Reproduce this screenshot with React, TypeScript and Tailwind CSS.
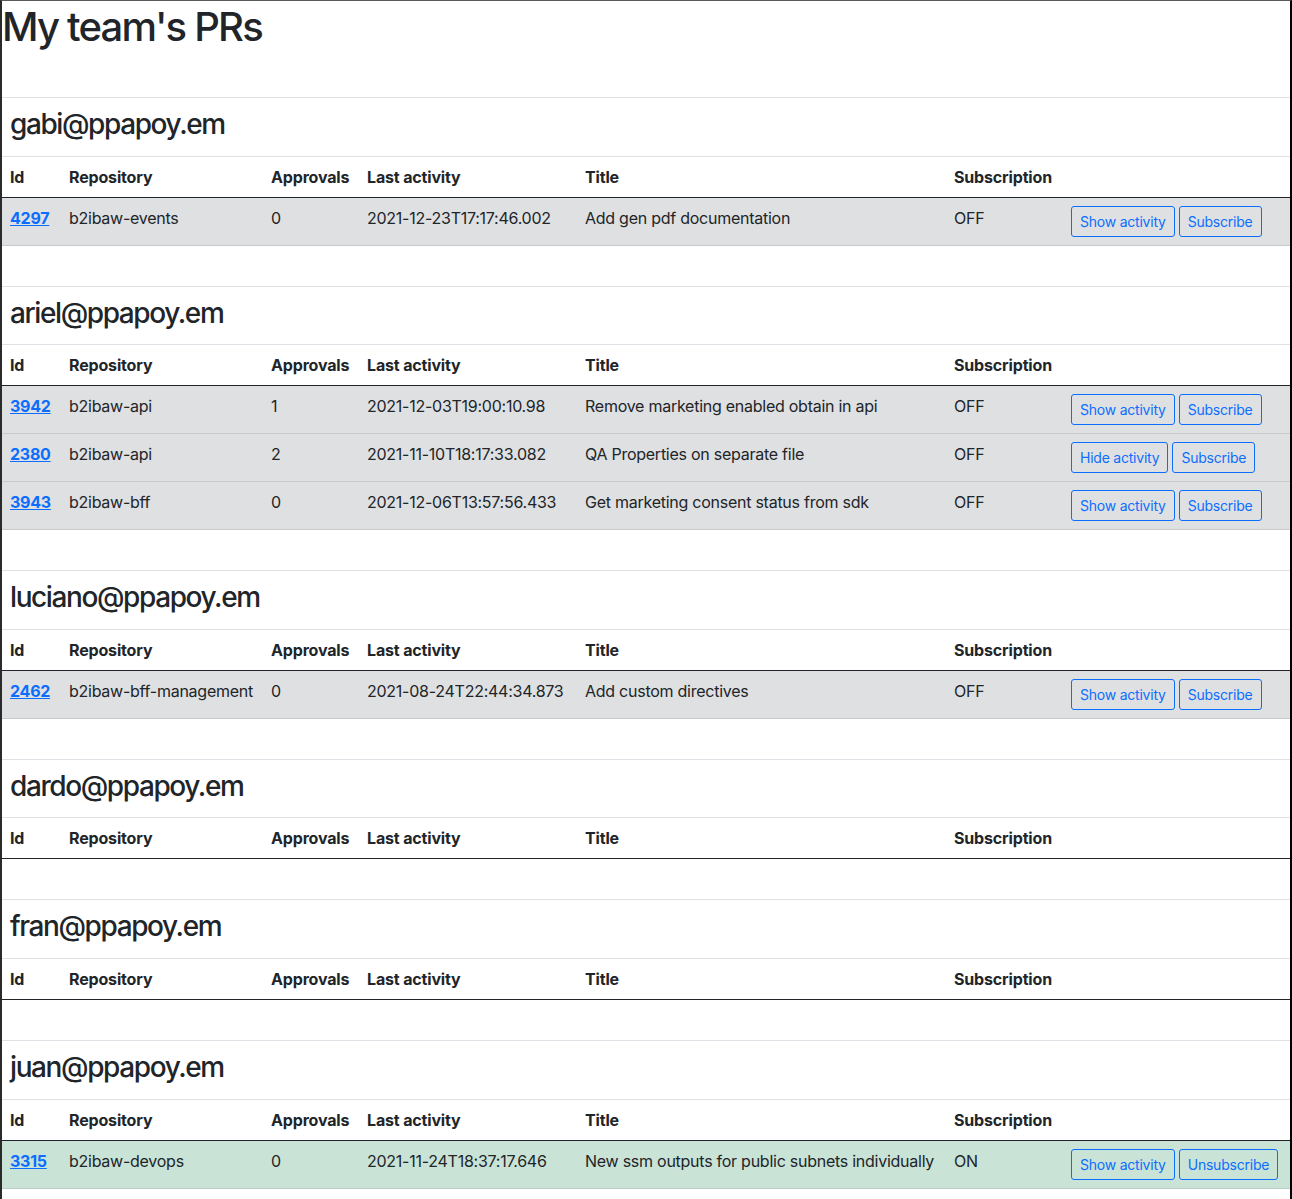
import React from "react";

type PR = {
  id: string;
  repo: string;
  approvals: string;
  last: string;
  title: string;
  sub: "ON" | "OFF";
  activity: "Show activity" | "Hide activity";
};

type Section = { email: string; prs: PR[] };

const sections: Section[] = [
  {
    email: "gabi@ppapoy.em",
    prs: [
      { id: "4297", repo: "b2ibaw-events", approvals: "0", last: "2021-12-23T17:17:46.002", title: "Add gen pdf documentation", sub: "OFF", activity: "Show activity" },
    ],
  },
  {
    email: "ariel@ppapoy.em",
    prs: [
      { id: "3942", repo: "b2ibaw-api", approvals: "1", last: "2021-12-03T19:00:10.98", title: "Remove marketing enabled obtain in api", sub: "OFF", activity: "Show activity" },
      { id: "2380", repo: "b2ibaw-api", approvals: "2", last: "2021-11-10T18:17:33.082", title: "QA Properties on separate file", sub: "OFF", activity: "Hide activity" },
      { id: "3943", repo: "b2ibaw-bff", approvals: "0", last: "2021-12-06T13:57:56.433", title: "Get marketing consent status from sdk", sub: "OFF", activity: "Show activity" },
    ],
  },
  {
    email: "luciano@ppapoy.em",
    prs: [
      { id: "2462", repo: "b2ibaw-bff-management", approvals: "0", last: "2021-08-24T22:44:34.873", title: "Add custom directives", sub: "OFF", activity: "Show activity" },
    ],
  },
  { email: "dardo@ppapoy.em", prs: [] },
  { email: "fran@ppapoy.em", prs: [] },
  {
    email: "juan@ppapoy.em",
    prs: [
      { id: "3315", repo: "b2ibaw-devops", approvals: "0", last: "2021-11-24T18:37:17.646", title: "New ssm outputs for public subnets individually", sub: "ON", activity: "Show activity" },
    ],
  },
];

const cols = "grid grid-cols-[59px_202px_96px_218px_369px_117px_1fr]";

function Btn({ children }: { children: React.ReactNode }) {
  return (
    <button className="border border-[#0d6efd] text-[#0d6efd] text-[14px] leading-[21px] tracking-[-0.016em] px-2 py-1 rounded-[3px] bg-transparent whitespace-nowrap">
      {children}
    </button>
  );
}

function SectionBlock({ s }: { s: Section }) {
  return (
    <>
      <div className="h-[41px] border-b border-[#dee2e6]" />
      <div className="px-2 pt-[10px] pb-[6px] border-b border-[#dee2e6]">
        <h3 className="text-[28px] leading-[1.2] font-medium tracking-[-0.05em] mb-2">{s.email}</h3>
      </div>
      <div className={`${cols} font-bold tracking-[-0.01em] border-b border-[#212529]`}>
        {["Id", "Repository", "Approvals", "Last activity", "Title", "Subscription", ""].map((h, i) => (
          <div key={i} className="p-2 leading-6 whitespace-nowrap">{h || "\u00a0"}</div>
        ))}
      </div>
      {s.prs.map((p) => {
        const on = p.sub === "ON";
        return (
          <div
            key={p.id}
            className={`${cols} border-b ${on ? "bg-[#c9e3d7] border-[#b8d0c5]" : "bg-[#dfe0e2] border-[#c9cacc]"}`}
          >
            <div className="p-2 leading-6">
              <a href="#" className="font-bold text-[#0d6efd] underline">{p.id}</a>
            </div>
            <div className="p-2 leading-6 whitespace-nowrap">{p.repo}</div>
            <div className="p-2 leading-6">{p.approvals}</div>
            <div className="p-2 leading-6 whitespace-nowrap">{p.last}</div>
            <div className="p-2 leading-6 whitespace-nowrap">{p.title}</div>
            <div className="p-2 leading-6">{p.sub}</div>
            <div className="p-2 flex gap-1 items-start">
              <Btn>{p.activity}</Btn>
              <Btn>{on ? "Unsubscribe" : "Subscribe"}</Btn>
            </div>
          </div>
        );
      })}
    </>
  );
}

export default function App() {
  return (
    <div
      className="min-h-[1199px] bg-white text-[#212529] text-[16px] tracking-[-0.016em] border-t border-t-[#5a5a5a] border-l-2 border-l-[#2a2a2a] border-r-2 border-r-black overflow-hidden"
      style={{ fontFamily: "Inter, 'Liberation Sans', sans-serif" }}
    >
      <h1 className="text-[40px] leading-[1.2] font-medium tracking-[-0.045em] pt-[2px] mb-[6px]">My team's PRs</h1>
      {sections.map((s) => (
        <SectionBlock key={s.email} s={s} />
      ))}
    </div>
  );
}
